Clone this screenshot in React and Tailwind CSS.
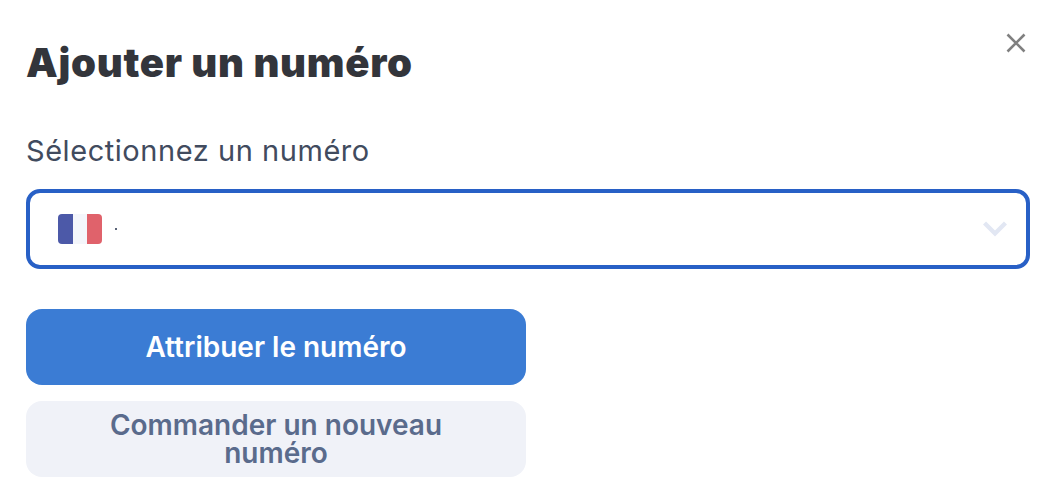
import React from "react";

export default function App() {
  return (
    <div className="relative w-[1064px] h-[504px] bg-white overflow-hidden pl-[26px] pr-[34px] pt-[36px] font-['Inter',sans-serif]">
      <button className="absolute left-[1005px] top-[32px] w-[22px] h-[22px] flex items-center justify-center">
        <svg width="22" height="22" viewBox="0 0 22 22" fill="none" stroke="#808080" strokeWidth="2.6">
          <path d="M2.5 2.5 L19.5 19.5 M19.5 2.5 L2.5 19.5" />
        </svg>
      </button>
      <h1 className="text-[40px] leading-[54px] font-black text-[#33353b] font-['Inter',sans-serif] tracking-[0.7px]">Ajouter un numéro</h1>
      <label className="block mt-[43px] text-[29px] leading-[36px] text-[#414b5e] tracking-[0.55px]">Sélectionnez un numéro</label>
      <div className="mt-[20px] h-[80px] border-[4px] border-[#2860c6] rounded-[14px] flex items-center pl-[28px] pr-[19px]">
        <div className="w-[44px] h-[30px] rounded-[4px] overflow-hidden flex">
          <div className="flex-1 bg-[#4c59a8]" />
          <div className="flex-1 bg-[#f4f6fb]" />
          <div className="flex-1 bg-[#e0626b]" />
        </div>
        <div className="ml-[13px] w-[1.5px] h-[1.5px] bg-[#5a6478]" />
        <svg className="ml-auto" width="24" height="16" viewBox="0 0 24 16" fill="none" stroke="#e2e7f3" strokeWidth="4.4">
          <path d="M1.5 2 L12 12.5 L22.5 2" />
        </svg>
      </div>
      <div className="mt-[40px] w-[500px] flex flex-col gap-[16px]">
        <button className="h-[76px] rounded-[16px] bg-[#3b7cd4] text-white text-[28px] leading-[30px] font-semibold">Attribuer le numéro</button>
        <button className="h-[76px] rounded-[16px] bg-[#f0f2f8] text-[#5a6b8c] text-[28px] leading-[28px] font-semibold px-[60px] flex items-center justify-center text-center">Commander un nouveau numéro</button>
      </div>
    </div>
  );
}
